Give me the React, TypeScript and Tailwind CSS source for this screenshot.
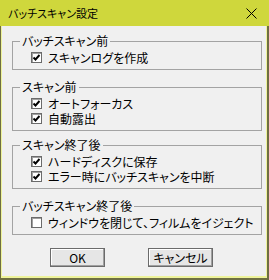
import type { ReactNode } from "react";

const font = { fontFamily: '"Noto Sans CJK JP", "Noto Sans", sans-serif' };

function Check({ checked, label }: { checked: boolean; label: string }) {
  return (
    <div className="flex h-[15px] items-center whitespace-nowrap">
      <span className="flex h-[11px] w-[11px] shrink-0 items-center justify-center border border-[#6b6b6b] bg-white shadow-[inset_1px_1px_0_#a0a0a0]">
        {checked && (
          <svg width="9" height="9" viewBox="0 0 9 9">
            <path d="M1.5 4.5 L3.5 6.5 L7.5 2" fill="none" stroke="#000" strokeWidth="1.9" />
          </svg>
        )}
      </span>
      <span className="ml-[6px] text-[12px] leading-[15px] text-black">{label}</span>
    </div>
  );
}

function Group({ title, mt, children }: { title: string; mt: string; children: ReactNode }) {
  return (
    <div className={`${mt} ml-[10px] mr-[4px] border border-[#a3a3a3] pb-[4px]`}>
      <div className="-mt-[8px] ml-[7px] w-fit whitespace-nowrap bg-[#f0f0f0] px-[2px] text-[12px] leading-[14px] text-black">
        {title}
      </div>
      <div className="flex flex-col pl-[18px] pt-[2px]">{children}</div>
    </div>
  );
}

export default function App() {
  return (
    <div
      className="flex h-[280px] w-[269px] flex-col bg-[#6e6e42] [font-feature-settings:'palt']"
      style={font}
    >
      <div className="flex h-[26px] items-center justify-between bg-[#cfd73c] pl-[8px] pr-[12px]">
        <span className="text-[11px] leading-[14px] text-black">バッチスキャン設定</span>
        <svg width="11" height="11" viewBox="0 0 11 11">
          <path d="M0.5 0.5 L10.5 10.5 M10.5 0.5 L0.5 10.5" stroke="#000" strokeWidth="1" />
        </svg>
      </div>
      <div className="flex flex-1 pb-[2px] pl-px pr-[2px]">
        <div className="flex flex-1 bg-[#eef39a] pb-[2px] pl-px pr-px">
          <div className="flex flex-1 flex-col bg-[#f0f0f0]">
            <Group title="バッチスキャン前" mt="mt-[15px]">
              <Check checked label="スキャンログを作成" />
            </Group>
            <Group title="スキャン前" mt="mt-[17px]">
              <Check checked label="オートフォーカス" />
              <Check checked label="自動露出" />
            </Group>
            <Group title="スキャン終了後" mt="mt-[14px]">
              <Check checked label="ハードディスクに保存" />
              <Check checked label="エラー時にバッチスキャンを中断" />
            </Group>
            <Group title="バッチスキャン終了後" mt="mt-[17px]">
              <Check checked={false} label="ウィンドウを閉じて、フィルムをイジェクト" />
            </Group>
            <div className="ml-[48px] mt-[13px] flex gap-[43px]">
              <button className="h-[19px] w-[55px] border border-[#6b6b6b] bg-[#e6e6e6] text-[12px] leading-[15px] text-black shadow-[inset_-1px_-1px_0_#a0a0a0,inset_1px_1px_0_#ffffff]">
                OK
              </button>
              <button className="h-[19px] w-[65px] border border-[#6b6b6b] bg-[#e6e6e6] text-[12px] leading-[15px] text-black shadow-[inset_-1px_-1px_0_#a0a0a0,inset_1px_1px_0_#ffffff]">
                キャンセル
              </button>
            </div>
          </div>
        </div>
      </div>
    </div>
  );
}
